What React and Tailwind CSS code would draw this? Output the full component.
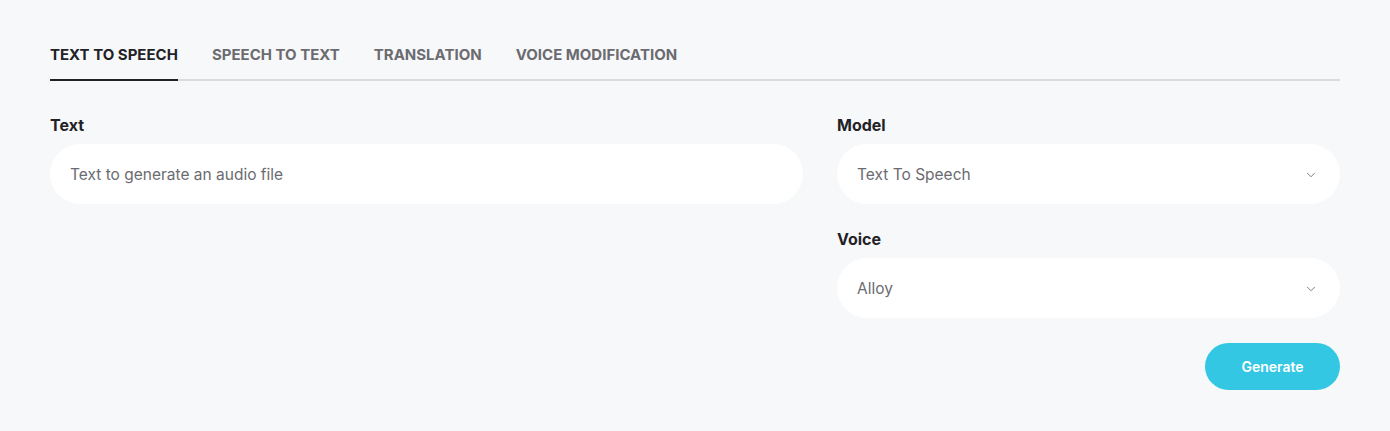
import { ChevronDown } from "lucide-react";

const tabs = ["Text to Speech", "Speech to Text", "Translation", "Voice Modification"];

function Select({ value }) {
  return (
    <div className="flex h-[60px] items-center justify-between rounded-full bg-white pl-5 pr-[22px] pt-[3px] text-[15.5px] text-[#6b6b70]">
      <span>{value}</span>
      <ChevronDown className="h-3.5 w-3.5 text-[#6b6b70]" strokeWidth={1.5} />
    </div>
  );
}

export default function App() {
  return (
    <div className="min-h-[431px] bg-[#f7f8fa] px-[50px] pt-[44px] font-['Inter',sans-serif] text-[#222226]">
      <div className="flex gap-[34px] border-b-2 border-[#d9dbe0]">
        {tabs.map((tab, i) => (
          <button
            key={tab}
            type="button"
            className={[
              "-mb-[2px] border-b-2 pb-[12px] text-[15px] font-bold uppercase",
              i === 0 ? "border-[#222226] text-[#222226]" : "border-transparent text-[#6b6b70]"
            ].join(" ")}
          >
            {tab}
          </button>
        ))}
      </div>

      <div className="mt-[32px] flex gap-[34px]">
        <div className="flex-1">
          <p className="mb-[7px] text-[16px] font-bold">Text</p>
          <div className="flex h-[60px] items-center rounded-full bg-white px-5 pt-[3px] text-[15.5px] text-[#6b6b70]">
            Text to generate an audio file
          </div>
        </div>
        <div className="w-[503px]">
          <p className="mb-[7px] text-[16px] font-bold">Model</p>
          <Select value="Text To Speech" />
          <p className="mb-[7px] mt-[23px] text-[16px] font-bold">Voice</p>
          <Select value="Alloy" />
          <div className="mt-[25px] flex justify-end">
            <button
              type="button"
              className="h-[47px] w-[135px] rounded-full bg-[#33c7e4] text-[14px] font-semibold text-white"
            >
              Generate
            </button>
          </div>
        </div>
      </div>
    </div>
  );
}
